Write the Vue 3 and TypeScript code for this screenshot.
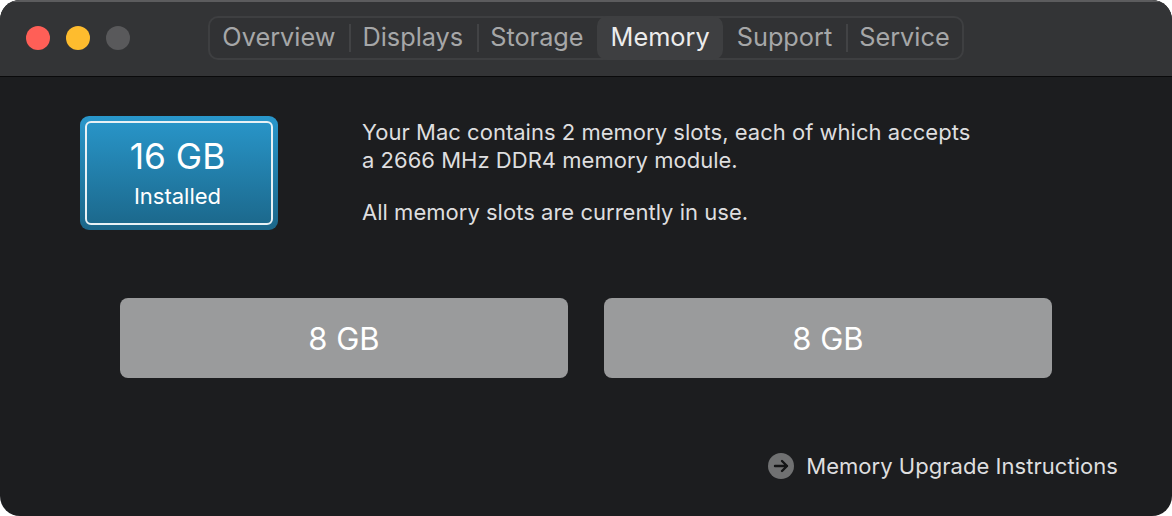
<script setup lang="ts">
const tabs = ['Overview', 'Displays', 'Storage', 'Memory', 'Support', 'Service']
const activeTab = 'Memory'
const slots = ['8 GB', '8 GB']
</script>

<template>
  <div class="window">
    <header class="titlebar">
      <div class="lights">
        <span class="light close"></span>
        <span class="light min"></span>
        <span class="light zoom"></span>
      </div>
      <nav class="tabs">
        <div v-for="tab in tabs" :key="tab" :class="['tab', { active: tab === activeTab }]">{{ tab }}</div>
      </nav>
    </header>

    <main class="content">
      <section class="summary">
        <div class="total">
          <div class="total_inner">
            <div class="total_size">16 GB</div>
            <div class="total_label">Installed</div>
          </div>
        </div>
        <div class="info">
          <p>Your Mac contains 2 memory slots, each of which accepts<br>a 2666 MHz DDR4 memory module.</p>
          <p>All memory slots are currently in use.</p>
        </div>
      </section>

      <section class="slots">
        <div v-for="(slot, i) in slots" :key="i" class="slot">{{ slot }}</div>
      </section>

      <footer class="footer">
        <svg class="arrow" width="26" height="26" viewBox="0 0 26 26">
          <circle cx="13" cy="13" r="13" fill="#707172" />
          <path d="M7 13H19M14 8l5 5-5 5" fill="none" stroke="#141516" stroke-width="2.4" stroke-linecap="round" stroke-linejoin="round" />
        </svg>
        <span>Memory Upgrade Instructions</span>
      </footer>
    </main>
  </div>
</template>

<style>
html, body {
  margin: 0;
  background: #fff;
}
</style>

<style scoped>
.window {
  width: 1172px;
  height: 516px;
  box-sizing: border-box;
  border-radius: 20px;
  overflow: hidden;
  background: #1c1d1f;
  font-family: Inter, "Noto Sans", sans-serif;
  display: flex;
  flex-direction: column;
}

.titlebar {
  height: 77px;
  box-sizing: border-box;
  flex: none;
  display: flex;
  align-items: flex-start;
  padding: 14px 0 0 26px;
  background: #333436;
  border-top: 2px solid #5c5c5e;
  border-bottom: 1px solid #0a0a0b;
}

.lights {
  display: flex;
  gap: 16px;
  margin-top: 10px;
}

.light {
  width: 24px;
  height: 24px;
  border-radius: 50%;
}
.light.close { background: #ff5f57; }
.light.min { background: #febc2e; }
.light.zoom { background: #59595b; }

.tabs {
  margin-left: 78px;
  height: 44px;
  width: 756px;
  box-sizing: border-box;
  display: flex;
  align-items: center;
  justify-content: center;
  border: 2px solid #3e3f41;
  border-radius: 10px;
  background: #313234;
}

.tab {
  position: relative;
  flex: none;
  font-size: 25.3px;
  color: #a6a7a8;
  padding: 0 13.5px;
  line-height: 42px;
  height: 44px;
}

.tab + .tab::before {
  content: '';
  position: absolute;
  left: 0;
  top: 8px;
  bottom: 8px;
  width: 2px;
  background: #424345;
}

.tab.active {
  color: #ececec;
  background: #3e3f41;
  border-radius: 10px;
}

.tab.active::before,
.tab.active + .tab::before {
  display: none;
}

.content {
  flex: 1;
  display: flex;
  flex-direction: column;
  padding: 39px 54px 0 80px;
}

.summary {
  display: flex;
  gap: 84px;
}

.total {
  width: 198px;
  height: 114px;
  box-sizing: border-box;
  padding: 5px;
  border-radius: 9px;
  background: linear-gradient(#2997cb, #1b6689);
}

.total_inner {
  height: 100%;
  box-sizing: border-box;
  border: 2px solid #e8f1f5;
  border-radius: 6px;
  padding-right: 3px;
  display: flex;
  flex-direction: column;
  align-items: center;
  color: #fff;
}

.total_size {
  font-size: 35.3px;
  line-height: 40px;
  margin-top: 14px;
}

.total_label {
  font-size: 22px;
  line-height: 28px;
  margin-top: 5px;
}

.info {
  color: #dededf;
  font-size: 22px;
  letter-spacing: 0.02px;
  line-height: 28px;
  padding-top: 2px;
}

.info p {
  margin: 0 0 24px;
}

.slots {
  display: flex;
  gap: 36px;
  margin: 48px 66px 0 40px;
}

.slot {
  flex: 1;
  height: 80px;
  border-radius: 8px;
  background: #9a9b9c;
  color: #fff;
  font-size: 31px;
  display: flex;
  align-items: center;
  justify-content: center;
}

.footer {
  display: flex;
  align-items: center;
  justify-content: flex-end;
  gap: 12px;
  margin-top: 74px;
  color: #dededf;
  font-size: 22px;
  letter-spacing: 0.04px;
  line-height: 28px;
}
</style>
